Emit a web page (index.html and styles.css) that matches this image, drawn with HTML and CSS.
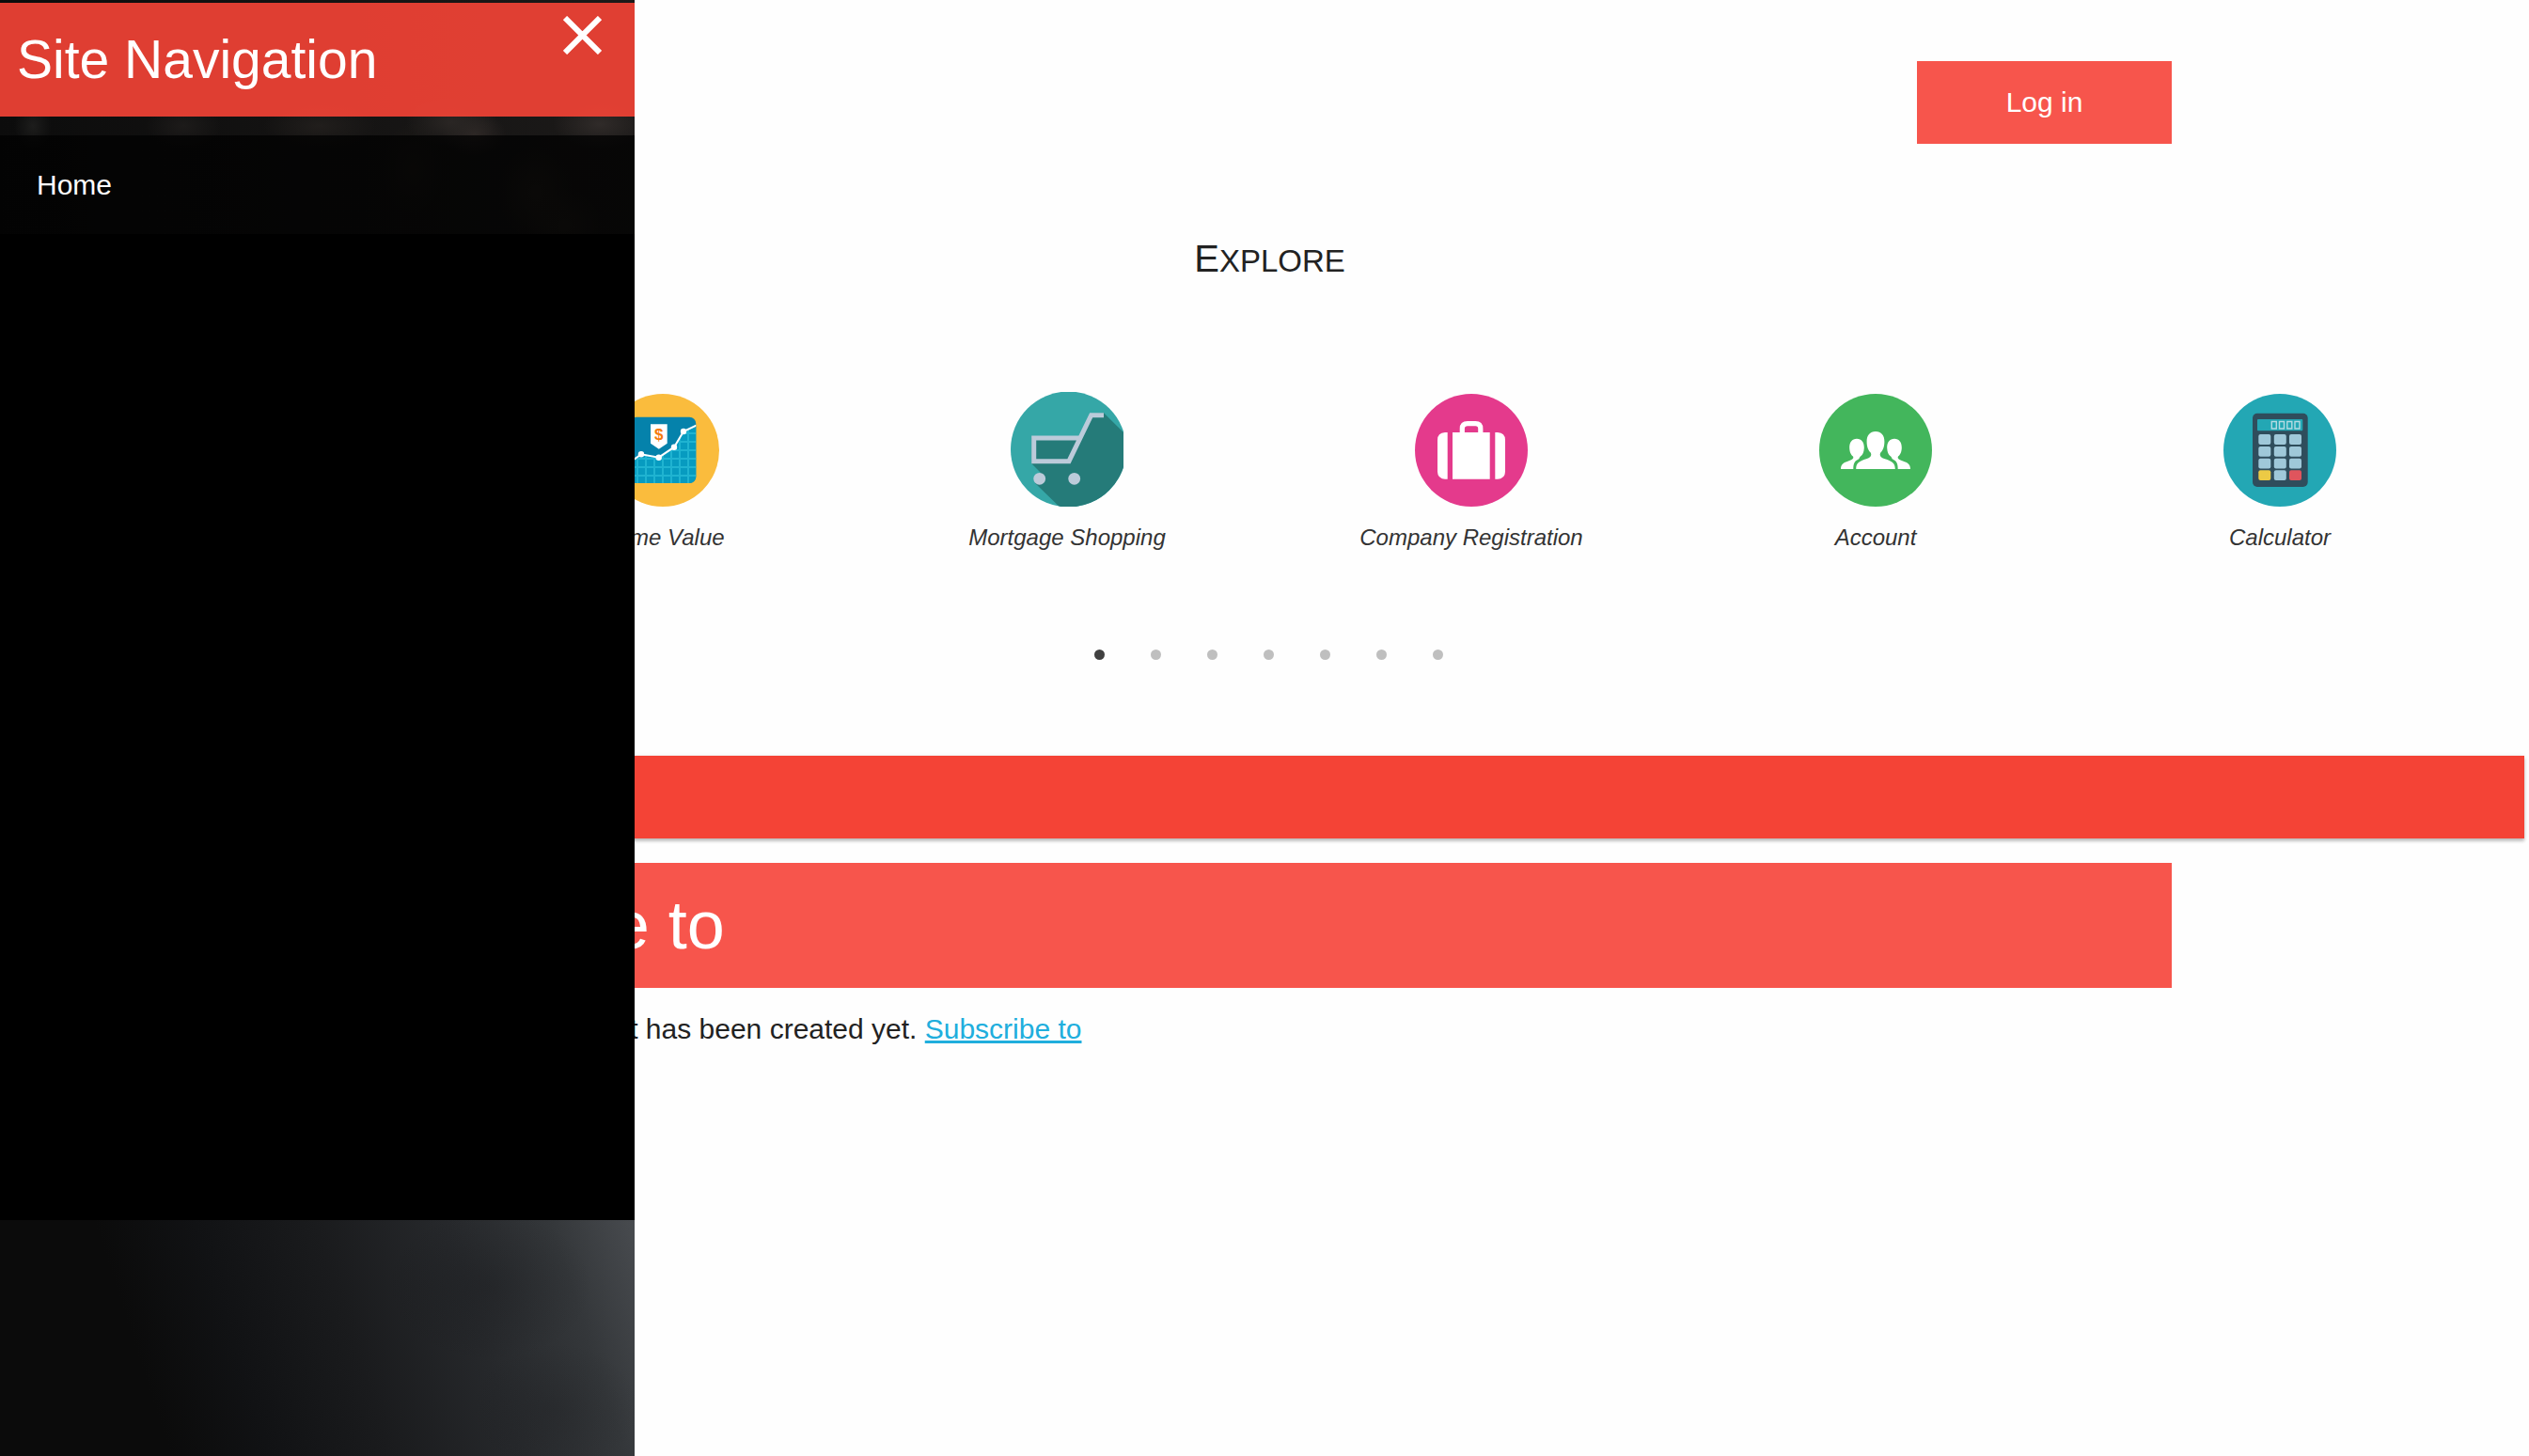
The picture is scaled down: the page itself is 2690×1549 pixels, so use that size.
FILE: index.html
```html
<!DOCTYPE html>
<html lang="en">
<head>
<meta charset="utf-8">
<meta name="viewport" content="width=device-width, initial-scale=1">
<title>Home</title>
<link rel="stylesheet" href="styles.css">
</head>
<body>
<aside class="drawer">
  <header class="drawer-header">
    <h2 class="drawer-title">Site Navigation</h2>
    <button class="drawer-close" type="button" aria-label="Close">
      <svg width="41" height="41" viewBox="0 0 41 41"><path d="M2 2L39 39M39 2L2 39" stroke="#fff" stroke-width="6" fill="none"/></svg>
    </button>
  </header>
  <nav class="drawer-nav">
    <a class="drawer-link" href="#">Home</a>
  </nav>
  <div class="drawer-photo"></div>
</aside>

<main class="page">
  <div class="container topbar">
    <button class="login" type="button">Log in</button>
  </div>

  <h2 class="explore">Explore</h2>

  <div class="carousel">
    <a class="item item-first" href="#">
      <svg width="120" height="120" viewBox="0 0 120 120">
        <defs>
          <pattern id="cells" x="32" y="41" width="9" height="9" patternUnits="userSpaceOnUse">
            <rect width="9" height="9" fill="#1fb3d1"/><rect x="2" y="2" width="7" height="7" fill="#079bc0"/>
          </pattern>
          <clipPath id="card"><rect x="25" y="24.7" width="70.3" height="70.3" rx="7"/></clipPath>
        </defs>
        <circle cx="60" cy="60" r="60" fill="#fabc3d"/>
        <g clip-path="url(#card)">
          <rect x="25" y="24" width="71" height="72" fill="#0582ab"/>
          <path d="M25 73L37 64.3 55.7 67.7 72 56.7 82 40 96 33.5V96H25z" fill="url(#cells)"/>
          <path d="M25 73L37 64.3 55.7 67.7 72 56.7 82 40 96 33.5" fill="none" stroke="#fff" stroke-width="2"/>
        </g>
        <g fill="#fff"><circle cx="37" cy="64.3" r="3.2"/><circle cx="55.7" cy="67.7" r="3.2"/><circle cx="72" cy="56.7" r="3.2"/><circle cx="82" cy="40" r="3.2"/>
        <path d="M47 32.3H64.7V52.7L55.8 58.7 47 52.7z"/></g>
        <text x="55.8" y="49" class="coin">$</text>
      </svg>
      <span>Home Value</span>
    </a>
    <a class="item" href="#">
      <svg width="120" height="122" viewBox="0 0 120 122">
        <clipPath id="disc"><circle cx="61.5" cy="61" r="61.5"/></clipPath>
        <g clip-path="url(#disc)">
          <rect width="120" height="122" fill="#35a7a7"/>
          <path d="M99 22.3L122 45V122H51.7L26 97 32 86 22.3 76.3V47H73L86 23z" fill="#257b79"/>
          <path d="M22.3 40H68L60 49H22.3z" fill="#35a7a7"/>
        </g>
        <path d="M99 24.7H85.7L62 73.7H24.7V49H73.5" fill="none" stroke="#bccbda" stroke-width="5"/>
        <g fill="#bccbda"><circle cx="30.7" cy="92.3" r="6.4"/><circle cx="67.7" cy="92.3" r="6.4"/></g>
      </svg>
      <span>Mortgage Shopping</span>
    </a>
    <a class="item" href="#">
      <svg width="120" height="120" viewBox="0 0 120 120">
        <circle cx="60" cy="60" r="60" fill="#e43a8c"/>
        <g fill="#fff"><path d="M34.7 41V90.7H32Q24 90 24 82.7V49Q24 41.500 32 41z"/><path d="M40 41H79.700V90.700H40z"/><path d="M85.300 41V90.700H88Q96 90 96 82.700V49Q96 41.500 88 41z"/></g>
        <path d="M50.300 42V37Q50.300 31.600 56 31.600H64.500Q69.800 31.600 69.800 37V42" fill="none" stroke="#fff" stroke-width="5.200"/>
      </svg>
      <span>Company Registration</span>
    </a>
    <a class="item" href="#">
      <svg width="120" height="120" viewBox="0 0 120 120">
        <circle cx="60" cy="60" r="60" fill="#43b65c"/>
        <defs><path id="side" d="M40 47.700C35 47.700 32 51.500 32.200 57.500C32.400 62.500 34 65 36 66.500C37.300 69 34.500 70.300 31 71.600C26 73.300 23 75 23 80H36.300C36.300 74.500 37.500 71.500 41.500 69.800C43 69 43 67 44 66.500C46.500 64.500 47.600 62 47.800 57.500C48 51.500 45 47.700 40 47.700z"/></defs>
        <use href="#side" fill="#fff"/>
        <use href="#side" fill="#fff" transform="matrix(-1 0 0 1 120 0)"/>
        <path fill="#fff" d="M60 40C54 40 50.500 44 50.600 51C50.700 57 52.500 60.500 54.700 62.500C56.500 66 54 68 50 69.300C43 71.500 39.200 73.500 39.200 80H80.800C80.800 73.500 77 71.500 70 69.300C66 68 63.500 66 65.300 62.500C67.500 60.500 69.300 57 69.400 51C69.500 44 66 40 60 40z"/>
      </svg>
      <span>Account</span>
    </a>
    <a class="item" href="#">
      <svg width="120" height="120" viewBox="0 0 120 120">
        <circle cx="60" cy="60" r="60" fill="#23a7b4"/>
        <rect x="31" y="20.700" width="58.700" height="78.300" rx="5" fill="#2f4d5c"/>
        <rect x="36" y="27" width="48.300" height="12.300" rx="1" fill="#23a7b4"/>
        <g fill="none" stroke="#b4dbe2" stroke-width="1.400"><path d="M51.300 29.500h5v7.500h-5zM59.500 29.500h5v7.500h-5zM67.800 29.500h5v7.500h-5zM76 29.500h5v7.500h-5z"/></g>
        <g fill="#9fc8d9">
          <rect x="37.300" y="43" width="13" height="11" rx="2"/><rect x="53.800" y="43" width="13" height="11" rx="2"/><rect x="70" y="43" width="13" height="11" rx="2"/>
          <rect x="37.300" y="56" width="13" height="10.700" rx="2"/><rect x="53.800" y="56" width="13" height="10.700" rx="2"/><rect x="70" y="56" width="13" height="10.700" rx="2"/>
          <rect x="37.300" y="68.700" width="13" height="10.700" rx="2"/><rect x="53.800" y="68.700" width="13" height="10.700" rx="2"/><rect x="70" y="68.700" width="13" height="10.700" rx="2"/>
          <rect x="53.800" y="81.300" width="13" height="10.700" rx="2"/>
        </g>
        <rect x="37.300" y="81.300" width="13" height="10.700" rx="2" fill="#ecca45"/>
        <rect x="70" y="81.300" width="13" height="10.700" rx="2" fill="#df555d"/>
      </svg>
      <span>Calculator</span>
    </a>
  </div>

  <div class="dots">
    <button class="dot dot-active" type="button" aria-label="Slide 1"></button>
    <button class="dot" type="button" aria-label="Slide 2"></button>
    <button class="dot" type="button" aria-label="Slide 3"></button>
    <button class="dot" type="button" aria-label="Slide 4"></button>
    <button class="dot" type="button" aria-label="Slide 5"></button>
    <button class="dot" type="button" aria-label="Slide 6"></button>
    <button class="dot" type="button" aria-label="Slide 7"></button>
  </div>

  <div class="strip"></div>

  <section class="container">
    <h1 class="welcome">Welcome to</h1>
    <p class="intro">No front page content has been created yet. <a href="#">Subscribe to</a></p>
  </section>
</main>
</body>
</html>
```
FILE: styles.css
```css
* { box-sizing: border-box; }

body {
  margin: 0;
  background: #fefefe;
  color: #222;
  font-family: "Liberation Sans", Arial, sans-serif;
  font-size: 30px;
  line-height: 45px;
}

h1, h2, p { margin: 0; font-weight: 400; }

button {
  padding: 0;
  border: 0;
  background: none;
  color: inherit;
  font: inherit;
  cursor: pointer;
}

svg { display: block; }

/* Navigation drawer, laid over the page */
.drawer {
  position: fixed;
  top: 0;
  bottom: 0;
  left: 0;
  z-index: 10;
  display: flex;
  flex-direction: column;
  width: 675px;
  padding-top: 3px;
  color: #fff;
  background:
    radial-gradient(ellipse 48px 26px at 480px 130px, #2a2624, transparent),
    radial-gradient(ellipse 50px 26px at 638px 132px, #302b29, transparent),
    radial-gradient(ellipse 34px 24px at 504px 142px, #2e2826, transparent),
    radial-gradient(ellipse 60px 24px at 340px 134px, #211e1c, transparent),
    radial-gradient(ellipse 40px 24px at 195px 134px, #1d1b1a, transparent),
    radial-gradient(ellipse 20px 24px at 35px 134px, #1d1d1c, transparent),
    radial-gradient(ellipse 40px 50px at 570px 205px, #28241f, transparent),
    radial-gradient(ellipse 34px 50px at 440px 180px, #1f1c18, transparent),
    radial-gradient(ellipse 40px 40px at 600px 240px, #28241f, transparent),
    linear-gradient(90deg, #0c0c0c, #1c1a19);
}

.drawer-header {
  display: flex;
  align-items: flex-start;
  justify-content: space-between;
  padding: 0 35px 0 18px;
  background: rgba(244, 67, 54, 0.91);
}

.drawer-title { font-size: 57px; line-height: 121px; }

.drawer-close { padding-top: 14px; }

.drawer-nav {
  flex: 1;
  margin-top: 20px;
  background: linear-gradient(rgba(0, 0, 0, 0.75) 105px, #000 105px);
}

.drawer-link {
  display: block;
  padding: 30px 39px;
  color: #fff;
  text-decoration: none;
}

.drawer-photo {
  height: 251px;
  background:
    radial-gradient(ellipse 110px 80px at 520px 70px, rgba(20, 21, 24, 0.25), transparent),
    radial-gradient(ellipse 90px 70px at 590px 200px, rgba(24, 25, 28, 0.2), transparent),
    linear-gradient(72deg, #0b0b0b 24%, #111214 38%, #1a1b1d 55%, #26282b 73%, #34373a 88%, #484b4f);
}

/* Page content */
.container {
  width: 100%;
  max-width: 1920px;
  margin: 0 auto;
  position: relative;
  left: 5px;
}

.topbar {
  display: flex;
  justify-content: flex-end;
  padding-top: 65px;
}

.login {
  width: 271px;
  color: #fff;
  line-height: 88px;
  background: #f7554c;
}

.explore {
  margin-top: 98px;
  padding-left: 11px;
  font-size: 33px;
  line-height: 48px;
  text-align: center;
  text-transform: uppercase;
}

.explore::first-letter { font-size: 40px; }

.carousel {
  display: grid;
  grid-template-columns: repeat(6, 1fr);
  align-items: end;
  margin-top: 115px;
  padding: 0 50px 0 60px;
}

.item {
  display: flex;
  flex-direction: column;
  align-items: center;
  gap: 15px;
  color: #333;
  font-size: 24px;
  font-style: italic;
  line-height: 36px;
  text-decoration: none;
}

.item-first { grid-column: 2; }

.coin {
  fill: #f57a0c;
  font-size: 17px;
  font-style: normal;
  font-weight: 700;
  text-anchor: middle;
}

.dots {
  display: flex;
  justify-content: center;
  margin-top: 91px;
  padding-left: 8px;
}

.dot {
  display: grid;
  place-items: center;
  width: 60px;
  height: 30px;
}

.dot::before {
  content: "";
  width: 11px;
  height: 11px;
  border-radius: 50%;
  background: #bfbfbf;
}

.dot-active::before { background: #404040; }

.strip {
  height: 88px;
  margin: 93px 5px 26px 15px;
  background: #f44336;
  box-shadow: 0 3px 3px rgba(0, 0, 0, 0.2), 0 1px 5px rgba(0, 0, 0, 0.12);
}

.welcome {
  padding-left: 2px;
  color: #fff;
  font-size: 72px;
  line-height: 133px;
  background: #f7554c;
}

.intro { margin-top: 21px; }

.intro a {
  color: #20aedd;
  text-decoration-thickness: 3px;
}
```
